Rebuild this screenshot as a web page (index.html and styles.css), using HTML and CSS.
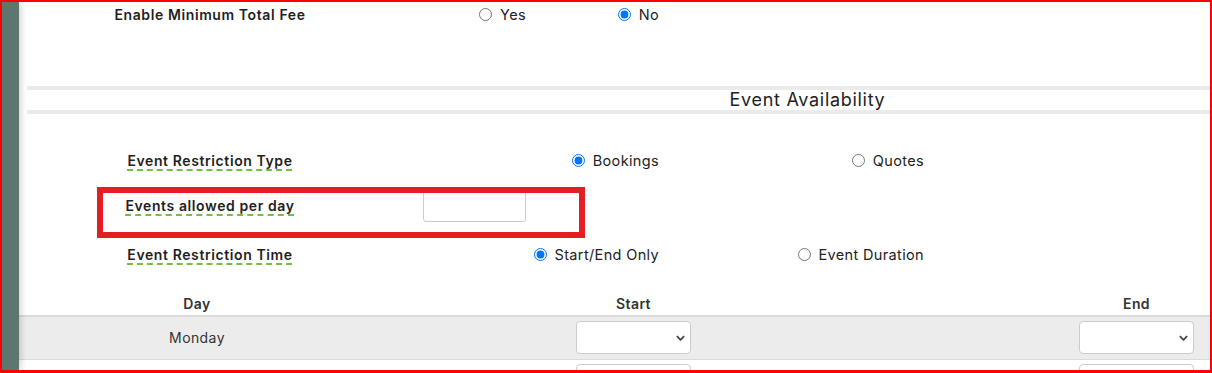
FILE: index.html
```html
<!DOCTYPE html>
<html lang="en">
<head>
    <meta charset="UTF-8">
    <meta name="viewport" content="width=device-width, initial-scale=1.0">
    <title>Event Settings</title>
    <link rel="stylesheet" href="styles.css">
</head>
<body>

    <div class="frame">
        <div class="sidebar"></div>

        <div class="main">
            <div class="row row-fee">
                <label class="label plain">Enable Minimum Total Fee</label>
                <label class="choice col-a"><input type="radio" name="minfee"> Yes</label>
                <label class="choice col-b"><input type="radio" name="minfee" checked> No</label>
            </div>

            <div class="section">
                <div class="section-title">Event Availability</div>
            </div>

            <div class="form-rows">
                <div class="row row-type">
                    <label class="label">Event Restriction Type</label>
                    <label class="choice col-ab"><input type="radio" name="rtype" checked> Bookings</label>
                    <label class="choice col-c"><input type="radio" name="rtype"> Quotes</label>
                </div>
                <div class="row row-allowed">
                    <label class="label">Events allowed per day</label>
                    <div class="col-a"><input type="text" class="text-input"></div>
                </div>
                <div class="row row-time">
                    <label class="label">Event Restriction Time</label>
                    <label class="choice col-ab"><input type="radio" name="rtime" checked> Start/End Only</label>
                    <label class="choice col-c"><input type="radio" name="rtime"> Event Duration</label>
                </div>
            </div>

            <div class="table">
                <div class="thead">
                    <div class="cell">Day</div>
                    <div class="cell">Start</div>
                    <div class="cell"></div>
                    <div class="cell">End</div>
                </div>
                <div class="trow shaded">
                    <div class="cell">Monday</div>
                    <div class="cell"><div class="select"><select></select><svg viewBox="0 0 10 6"><path d="M1 1l4 4 4-4" /></svg></div></div>
                    <div class="cell"></div>
                    <div class="cell"><div class="select"><select></select><svg viewBox="0 0 10 6"><path d="M1 1l4 4 4-4" /></svg></div></div>
                </div>
                <div class="trow">
                    <div class="cell"></div>
                    <div class="cell"><div class="select"><select></select><svg viewBox="0 0 10 6"><path d="M1 1l4 4 4-4" /></svg></div></div>
                    <div class="cell"></div>
                    <div class="cell"><div class="select"><select></select><svg viewBox="0 0 10 6"><path d="M1 1l4 4 4-4" /></svg></div></div>
                </div>
            </div>
        </div>

        <div class="highlight"></div>
    </div>

</body>
</html>
```

FILE: styles.css
```css
body {
    font-family: Inter, "Noto Sans", sans-serif;
    color: #222;
    margin: 0;
    background: #fff;
}
.frame {
    position: relative;
    display: flex;
    height: 373px;
    box-sizing: border-box;
    border: 2px solid #f00;
    border-bottom-width: 3px;
    overflow: hidden;
}
.sidebar {
    width: 17px;
    flex-shrink: 0;
    background: #5e7670;
    box-shadow: 2px 0 6px rgba(0, 0, 0, 0.18);
    position: relative;
    z-index: 1;
}
.main {
    flex: 1;
    min-width: 0;
}
.row {
    display: grid;
    grid-template-columns: 382px 125px 133px 265px 1fr;
    align-items: center;
}
.label {
    grid-column: 1;
    text-align: center;
    font-size: 14px;
    font-weight: 600;
    letter-spacing: 0.6px;
    color: #1f1f1f;
    text-decoration: underline dashed #72bf44;
    text-decoration-thickness: 2px;
    text-underline-offset: 4px;
}
.label.plain {
    text-decoration: none;
}
.choice {
    display: flex;
    align-items: center;
    justify-content: flex-end;
    gap: 8px;
    font-size: 14.5px;
    letter-spacing: 0.35px;
    color: #222;
}
.choice input {
    margin: 0;
    width: 13px;
    height: 13px;
}
.col-a {
    grid-column: 2;
    display: flex;
    justify-content: flex-end;
}
.col-b {
    grid-column: 3;
}
.col-ab {
    grid-column: 2 / 4;
}
.col-c {
    grid-column: 4;
}
.row-fee {
    height: 25px;
}
.section {
    margin: 59px 0 0 8px;
    border-top: 4px solid #ebebeb;
    border-bottom: 4px solid #ebebeb;
}
.section-title {
    height: 20px;
    line-height: 19px;
    padding-left: 378px;
    text-align: center;
    font-size: 18px;
    letter-spacing: 0.7px;
    color: #222;
}
.form-rows {
    padding-top: 25px;
}
.row-type {
    height: 42px;
}
.row-allowed {
    height: 48px;
}
.row-time {
    height: 50px;
}
.text-input {
    width: 103px;
    height: 31px;
    box-sizing: border-box;
    border: 1px solid #ccc;
    border-radius: 3px;
    margin: 2px 0 0;
}
.table {
    font-size: 14px;
}
.thead, .trow {
    display: grid;
    grid-template-columns: 356px 517px 1fr 147px;
}
.thead {
    height: 36px;
    align-items: end;
    font-weight: 600;
    letter-spacing: 0.4px;
    border-bottom: 2px solid #dadada;
}
.thead .cell {
    padding-bottom: 3px;
}
.trow {
    height: 42px;
    align-items: start;
    border-bottom: 1px solid #dadada;
}
.trow .cell {
    padding-top: 4px;
}
.trow .cell:first-child {
    padding-top: 12px;
    letter-spacing: 0.4px;
}
.shaded {
    background: #ececec;
}
.cell {
    text-align: center;
    color: #333;
}
.select {
    position: relative;
    display: inline-block;
    width: 115px;
    height: 33px;
}
.select select {
    appearance: none;
    width: 100%;
    height: 100%;
    border: 1px solid #ccc;
    border-radius: 4px;
    background: #fff;
}
.select svg {
    position: absolute;
    right: 6px;
    top: 14px;
    width: 9px;
    height: 6px;
    fill: none;
    stroke: #444;
    stroke-width: 2;
}
.highlight {
    position: absolute;
    left: 95px;
    top: 185px;
    width: 488px;
    height: 51px;
    box-sizing: border-box;
    border: 6px solid #e41e25;
}
```
